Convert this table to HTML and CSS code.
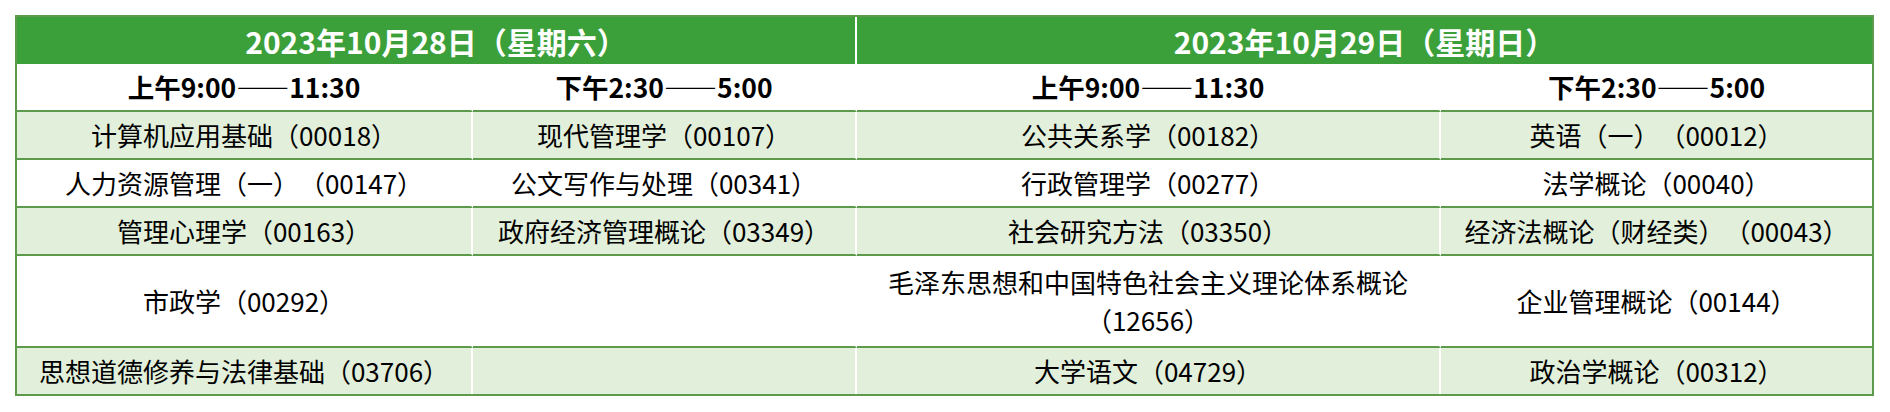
FILE: index.html
```html
<!DOCTYPE html>
<html lang="zh-CN">
<head>
<meta charset="utf-8">
<title>考试安排</title>
<link rel="stylesheet" href="styles.css">
</head>
<body>
<table class="schedule">
  <colgroup>
    <col class="c1"><col class="c2"><col class="c3"><col class="c4">
  </colgroup>
  <tr class="day-row">
    <th colspan="2" class="day split">2023年10月28日（星期六）</th>
    <th colspan="2" class="day">2023年10月29日（星期日）</th>
  </tr>
  <tr class="time-row">
    <th class="time split">上午9:00——11:30</th>
    <th class="time split">下午2:30——5:00</th>
    <th class="time split">上午9:00——11:30</th>
    <th class="time">下午2:30——5:00</th>
  </tr>
  <tr class="shade">
    <td class="split">计算机应用基础（00018）</td>
    <td class="split">现代管理学（00107）</td>
    <td class="split">公共关系学（00182）</td>
    <td>英语（一）（00012）</td>
  </tr>
  <tr>
    <td class="split">人力资源管理（一）（00147）</td>
    <td class="split">公文写作与处理（00341）</td>
    <td class="split">行政管理学（00277）</td>
    <td>法学概论（00040）</td>
  </tr>
  <tr class="shade">
    <td class="split">管理心理学（00163）</td>
    <td class="split">政府经济管理概论（03349）</td>
    <td class="split">社会研究方法（03350）</td>
    <td>经济法概论（财经类）（00043）</td>
  </tr>
  <tr class="tall">
    <td class="split">市政学（00292）</td>
    <td class="split"></td>
    <td class="split wrap">毛泽东思想和中国特色社会主义理论体系概论（12656）</td>
    <td>企业管理概论（00144）</td>
  </tr>
  <tr class="shade last">
    <td class="split">思想道德修养与法律基础（03706）</td>
    <td class="split"></td>
    <td class="split">大学语文（04729）</td>
    <td>政治学概论（00312）</td>
  </tr>
</table>
</body>
</html>
```

FILE: styles.css
```css
html, body {
  margin: 0;
  padding: 0;
  background: #ffffff;
}

body {
  padding: 15px 0 0 15px;
  font-family: "Noto Sans CJK SC", "Microsoft YaHei", sans-serif;
  color: #000000;
}

.schedule {
  width: 1859px;
  table-layout: fixed;
  border-collapse: separate;
  border-spacing: 0;
  border: 2px solid #5b9b4b;
  text-spacing-trim: space-all;
}

.c1 { width: 456px; }
.c2 { width: 384px; }
.c3 { width: 584px; }
.c4 { width: 431px; }

.schedule th,
.schedule td {
  box-sizing: border-box;
  padding: 0 4px;
  text-align: center;
  vertical-align: middle;
  font-size: 26px;
  line-height: 38px;
  border-bottom: 2px solid #5b9b4b;
  text-spacing-trim: space-all;
}

.schedule .split {
  border-right: 2px solid #ffffff;
}

.day {
  height: 47px;
  background: #3ca03a;
  color: #ffffff;
  font-weight: 700;
}

.schedule .day {
  border-bottom: none;
  font-size: 30px;
}

.time {
  height: 48px;
  background: #ffffff;
  font-weight: 700;
}

.schedule .time {
  font-size: 26.5px;
}

.schedule td {
  height: 48px;
  font-weight: 400;
  white-space: nowrap;
}

.shade td {
  background: #e2efda;
}

.tall td {
  height: 92px;
}

.schedule td.wrap {
  white-space: normal;
}

.last td {
  height: 46px;
  border-bottom: none;
}
```
